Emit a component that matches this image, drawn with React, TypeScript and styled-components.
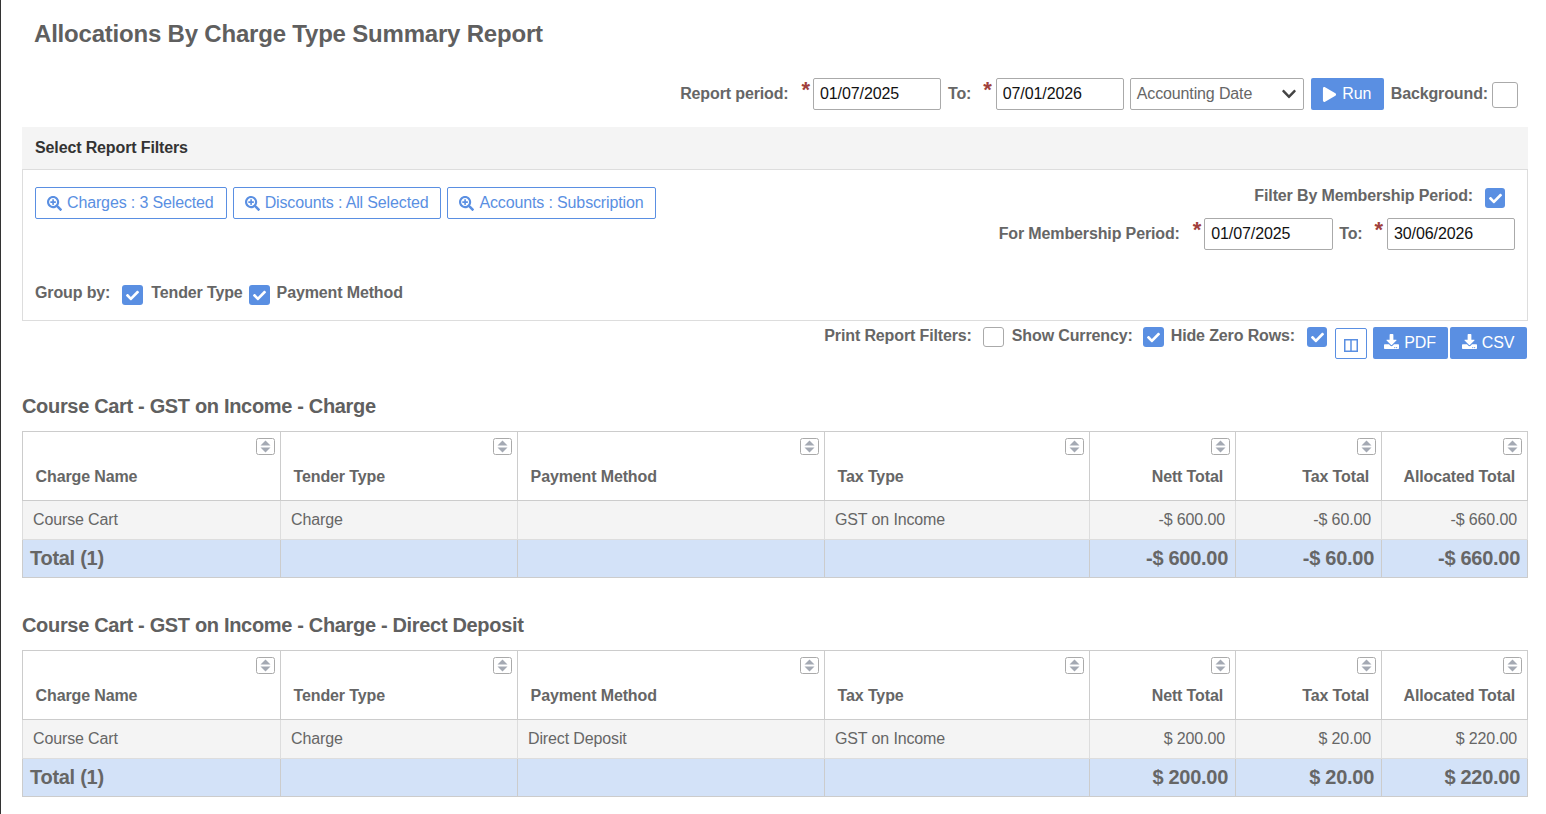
import React from "react";
import styled, { createGlobalStyle } from "styled-components";
import { FaCheck, FaChevronDown, FaDownload, FaPlay, FaSearchPlus } from "react-icons/fa";

const Global = createGlobalStyle`
  html, body { margin: 0; padding: 0; background: #fff; }
  body { font-family: "Liberation Sans", Arial, sans-serif; color: #666; overflow: hidden; letter-spacing: -0.13px; }
`;

const BLUE = "#5a8fe2";

const Page = styled.div`
  width: 1546px;
  height: 814px;
  box-sizing: border-box;
  border-left: 1px solid #333;
  padding: 0 18px 0 21px;
  overflow: hidden;
`;

const Title = styled.h1`
  margin: 0;
  padding: 20px 0 0 12px;
  height: 78px;
  box-sizing: border-box;
  font-size: 24px;
  line-height: 28px;
  font-weight: 700;
  letter-spacing: -0.2px;
  color: #5f5f5f;
`;

const Toolbar = styled.div`
  display: flex;
  justify-content: flex-end;
  align-items: center;
  height: 32px;
  padding-right: 10px;
  margin-bottom: 17px;
`;

const Label = styled.span<{ $ml?: number; $mt?: number }>`
  font-size: 16px;
  line-height: 20px;
  font-weight: 700;
  color: #666;
  white-space: nowrap;
  margin-left: ${(p) => p.$ml ?? 0}px;
  margin-top: ${(p) => p.$mt ?? 0}px;
`;

const Star = styled.span<{ $ml: number; $mr: number }>`
  color: #a0403c;
  font-size: 22px;
  line-height: 22px;
  height: 22px;
  font-weight: 700;
  margin: -8px ${(p) => p.$mr}px 0 ${(p) => p.$ml}px;
`;

const DateInput = styled.input<{ $w: number }>`
  box-sizing: border-box;
  width: ${(p) => p.$w}px;
  height: 32px;
  border: 1px solid #aaa;
  border-radius: 2px;
  padding: 0 6px;
  font: 16px "Liberation Sans", Arial, sans-serif;
  letter-spacing: -0.1px;
  color: #111;
  background: #fff;
`;

const SelectBox = styled.div`
  box-sizing: border-box;
  display: flex;
  align-items: center;
  justify-content: space-between;
  width: 174px;
  height: 32px;
  margin-left: 6px;
  border: 1px solid #aaa;
  border-radius: 2px;
  padding: 0 6px 0 6px;
  font-size: 16px;
  color: #666;
  svg { color: #444; width: 16px; height: 16px; }
`;

const SolidButton = styled.button<{ $w: number; $ml?: number; $h?: number }>`
  box-sizing: border-box;
  display: inline-flex;
  align-items: center;
  justify-content: center;
  gap: 5px;
  width: ${(p) => p.$w}px;
  height: ${(p) => p.$h ?? 32}px;
  margin-left: ${(p) => p.$ml ?? 0}px;
  padding: 0 1px 0 0;
  border: 0;
  border-radius: 2px;
  background: ${BLUE};
  color: #fff;
  font: 16px "Liberation Sans", Arial, sans-serif;
  letter-spacing: -0.13px;
`;

const RaisedIcon = styled.span`
  display: inline-flex;
  margin-top: -3px;
`;

const Check = styled.span<{ $on?: boolean; $size?: number; $w?: number; $ml?: number; $mr?: number; $mt?: number }>`
  box-sizing: border-box;
  display: inline-flex;
  align-items: center;
  justify-content: center;
  flex: none;
  width: ${(p) => p.$size ?? p.$w ?? 21}px;
  height: ${(p) => p.$size ?? 20}px;
  margin: ${(p) => p.$mt ?? 0}px ${(p) => p.$mr ?? 0}px 0 ${(p) => p.$ml ?? 0}px;
  border-radius: 3px;
  border: ${(p) => (p.$on ? "0" : "1px solid #aaa")};
  background: ${(p) => (p.$on ? BLUE : "#fff")};
  color: #fff;
  svg { width: 13px; height: 13px; }
`;

const Panel = styled.section`
  width: 1506px;
`;

const PanelHead = styled.div`
  box-sizing: border-box;
  height: 42px;
  padding: 11px 13px 0;
  background: #f4f4f4;
  font-size: 16px;
  line-height: 20px;
  font-weight: 700;
  color: #333;
`;

const PanelBody = styled.div`
  box-sizing: border-box;
  height: 152px;
  border: 1px solid #ddd;
  display: flex;
  justify-content: space-between;
  padding: 17px 12px 0;
`;

const LeftCol = styled.div`
  display: flex;
  flex-direction: column;
`;

const FilterRow = styled.div`
  display: flex;
  gap: 6px;
`;

const OutlineButton = styled.button`
  box-sizing: border-box;
  display: inline-flex;
  align-items: center;
  gap: 5px;
  height: 32px;
  padding: 0 12px 0 11px;
  border: 1px solid ${BLUE};
  border-radius: 2px;
  background: #fff;
  color: ${BLUE};
  font: 16px "Liberation Sans", Arial, sans-serif;
  letter-spacing: -0.14px;
  svg { width: 15px; height: 15px; }
`;

const GroupRow = styled.div`
  display: flex;
  align-items: flex-start;
  margin-top: 64px;
`;

const RightCol = styled.div`
  display: flex;
  flex-direction: column;
  align-items: flex-end;
`;

const MemberTop = styled.div`
  display: flex;
  align-items: flex-start;
  height: 31px;
  padding-right: 10px;
`;

const MemberRow = styled.div`
  display: flex;
  align-items: center;
  height: 32px;
`;

const PrintRow = styled.div`
  display: flex;
  justify-content: flex-end;
  align-items: flex-start;
  height: 32px;
  margin-top: 6px;
  padding-right: 1px;
  margin-bottom: 34px;
`;

const ColumnsButton = styled.button`
  box-sizing: border-box;
  display: inline-flex;
  align-items: center;
  justify-content: center;
  width: 32px;
  height: 31px;
  margin: 1px 0 0 8px;
  padding: 3px 0 0;
  border: 1px solid ${BLUE};
  border-radius: 2px;
  background: #fff;
`;

const SectionTitle = styled.h2`
  margin: 0;
  height: 38px;
  font-size: 20px;
  line-height: 27px;
  font-weight: 700;
  letter-spacing: -0.33px;
  color: #606060;
`;

const Section = styled.section<{ $mb?: number }>`
  width: 1506px;
  margin-bottom: ${(p) => p.$mb ?? 0}px;
`;

const Table = styled.table`
  width: 1505px;
  table-layout: fixed;
  border-collapse: collapse;
`;

const Col = styled.col<{ $w: number }>`
  width: ${(p) => p.$w}px;
`;

const HeadCell = styled.th<{ $right?: boolean }>`
  box-sizing: border-box;
  height: 69px;
  padding: 6px 5px 0 12.6px;
  border: 1px solid #ccc;
  vertical-align: top;
  background: #fff;
  font-size: 16px;
  font-weight: 700;
  color: #666;
  text-align: ${(p) => (p.$right ? "right" : "left")};
`;

const HeadInner = styled.div`
  display: flex;
  flex-direction: column;
`;

const SortBox = styled.span`
  align-self: flex-end;
  display: block;
  height: 17px;
  svg { display: block; }
`;

const HeadText = styled.span<{ $right?: boolean }>`
  display: block;
  margin-top: 12px;
  line-height: 20px;
  padding-right: ${(p) => (p.$right ? 7 : 0)}px;
`;

const Cell = styled.td<{ $right?: boolean }>`
  box-sizing: border-box;
  height: 39px;
  padding: 0 10px;
  border: 1px solid #ddd;
  background: #f4f4f4;
  font-size: 16px;
  color: #666;
  text-align: ${(p) => (p.$right ? "right" : "left")};
`;

const TotalCell = styled.td<{ $right?: boolean }>`
  box-sizing: border-box;
  height: 38px;
  padding: 0 7px;
  border: 1px solid #ccc;
  background: #d3e2f8;
  font-size: 20px;
  font-weight: 700;
  letter-spacing: -0.28px;
  color: #666;
  text-align: ${(p) => (p.$right ? "right" : "left")};
`;

const Sort = () => (
  <SortBox>
    <svg width="19" height="17" viewBox="0 0 19 17">
      <rect x="0.5" y="0.5" width="18" height="16" rx="2" fill="#fff" stroke="#aaa" />
      <path d="M9.5 2.5 L14.5 7.5 H4.5 Z" fill="#a4a9b3" />
      <path d="M9.5 14.5 L14.5 9.5 H4.5 Z" fill="#a4a9b3" />
    </svg>
  </SortBox>
);

const columns = [
  { name: "Charge Name", w: 258 },
  { name: "Tender Type", w: 237 },
  { name: "Payment Method", w: 307 },
  { name: "Tax Type", w: 265 },
  { name: "Nett Total", w: 146 },
  { name: "Tax Total", w: 146 },
  { name: "Allocated Total", w: 146 },
];

type Data = { title: string; method: string; nett: string; tax: string; alloc: string; mb?: number };

const Report = ({ title, method, nett, tax, alloc, mb }: Data) => (
  <Section $mb={mb}>
    <SectionTitle>{title}</SectionTitle>
    <Table>
      <colgroup>
        {columns.map((c) => (
          <Col key={c.name} $w={c.w} />
        ))}
      </colgroup>
      <thead>
        <tr>
          {columns.map((c, i) => (
            <HeadCell key={c.name} $right={i > 3}>
              <HeadInner>
                <Sort />
                <HeadText $right={i > 3}>{c.name}</HeadText>
              </HeadInner>
            </HeadCell>
          ))}
        </tr>
      </thead>
      <tbody>
        <tr>
          <Cell>Course Cart</Cell>
          <Cell>Charge</Cell>
          <Cell>{method}</Cell>
          <Cell>GST on Income</Cell>
          <Cell $right>{nett}</Cell>
          <Cell $right>{tax}</Cell>
          <Cell $right>{alloc}</Cell>
        </tr>
        <tr>
          <TotalCell>Total (1)</TotalCell>
          <TotalCell />
          <TotalCell />
          <TotalCell />
          <TotalCell $right>{nett}</TotalCell>
          <TotalCell $right>{tax}</TotalCell>
          <TotalCell $right>{alloc}</TotalCell>
        </tr>
      </tbody>
    </Table>
  </Section>
);

const On = (p: { $w?: number; $ml?: number; $mr?: number; $mt?: number }) => (
  <Check $on {...p}>
    <FaCheck />
  </Check>
);

export default function App() {
  return (
    <Page>
      <Global />
      <Title>Allocations By Charge Type Summary Report</Title>
      <Toolbar>
        <Label>Report period:</Label>
        <Star $ml={13} $mr={3}>*</Star>
        <DateInput $w={128} readOnly value="01/07/2025" />
        <Label $ml={7}>To:</Label>
        <Star $ml={12} $mr={4}>*</Star>
        <DateInput $w={128} readOnly value="07/01/2026" />
        <SelectBox>
          Accounting Date
          <FaChevronDown />
        </SelectBox>
        <SolidButton $w={73} $ml={7}>
          <FaPlay size={15} />
          Run
        </SolidButton>
        <Label $ml={7}>Background:</Label>
        <Check $size={26} $ml={4} $mt={2} />
      </Toolbar>
      <Panel>
        <PanelHead>Select Report Filters</PanelHead>
        <PanelBody>
          <LeftCol>
            <FilterRow>
              <OutlineButton><FaSearchPlus />Charges : 3 Selected</OutlineButton>
              <OutlineButton><FaSearchPlus />Discounts : All Selected</OutlineButton>
              <OutlineButton><FaSearchPlus />Accounts : Subscription</OutlineButton>
            </FilterRow>
            <GroupRow>
              <Label>Group by:</Label>
              <On $ml={12} $mr={8} $mt={2} />
              <Label>Tender Type</Label>
              <On $ml={6} $mr={7} $mt={2} />
              <Label>Payment Method</Label>
            </GroupRow>
          </LeftCol>
          <RightCol>
            <MemberTop>
              <Label $mt={-1}>Filter By Membership Period:</Label>
              <On $w={20} $ml={12} $mt={1} />
            </MemberTop>
            <MemberRow>
              <Label>For Membership Period:</Label>
              <Star $ml={13} $mr={3}>*</Star>
              <DateInput $w={129} readOnly value="01/07/2025" />
              <Label $ml={6}>To:</Label>
              <Star $ml={12} $mr={4}>*</Star>
              <DateInput $w={128} readOnly value="30/06/2026" />
            </MemberRow>
          </RightCol>
        </PanelBody>
      </Panel>
      <PrintRow>
        <Label $mt={-1}>Print Report Filters:</Label>
        <Check $ml={11} />
        <Label $ml={8} $mt={-1}>Show Currency:</Label>
        <On $ml={10} />
        <Label $ml={7} $mt={-1}>Hide Zero Rows:</Label>
        <On $w={20} $ml={12} />
        <ColumnsButton>
          <svg width="14" height="13" viewBox="0 0 14 13">
            <rect x="0.75" y="0.75" width="12.5" height="11.5" fill="none" stroke={BLUE} strokeWidth="1.5" />
            <path d="M7 1v11" stroke={BLUE} strokeWidth="1.5" />
          </svg>
        </ColumnsButton>
        <SolidButton $w={75} $ml={6}><RaisedIcon><FaDownload size={15} /></RaisedIcon>PDF</SolidButton>
        <SolidButton $w={77} $ml={2}><RaisedIcon><FaDownload size={15} /></RaisedIcon>CSV</SolidButton>
      </PrintRow>
      <Report title="Course Cart - GST on Income - Charge" method="" nett="-$ 600.00" tax="-$ 60.00" alloc="-$ 660.00" mb={34} />
      <Report title="Course Cart - GST on Income - Charge - Direct Deposit" method="Direct Deposit" nett="$ 200.00" tax="$ 20.00" alloc="$ 220.00" />
    </Page>
  );
}
